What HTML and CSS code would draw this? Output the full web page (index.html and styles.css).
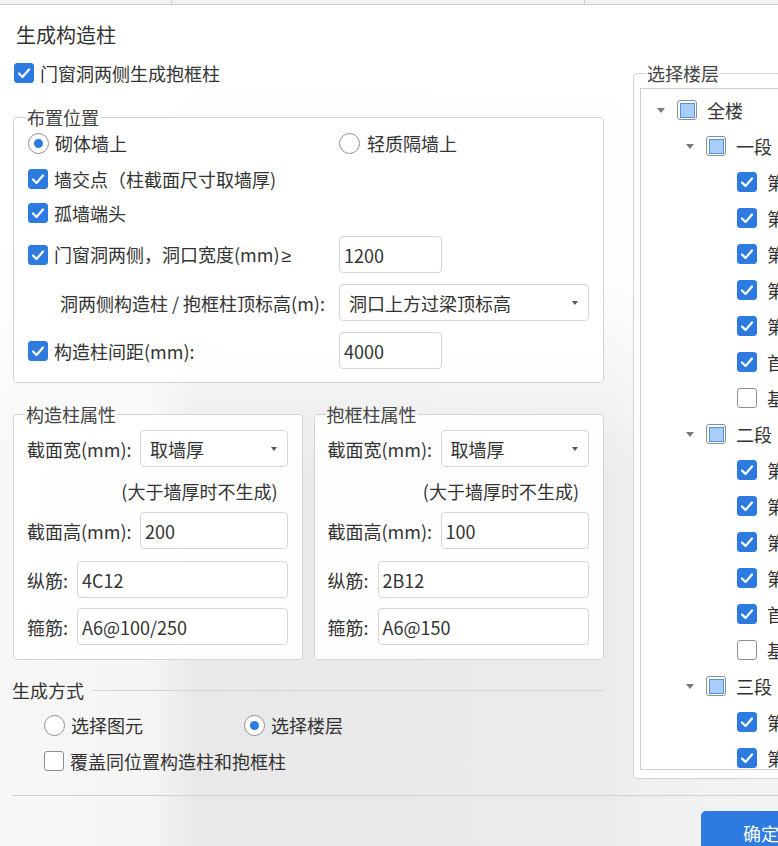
FILE: index.html
```html
<!DOCTYPE html>
<html lang="zh-CN">
<head>
<meta charset="utf-8">
<title>生成构造柱</title>
<link rel="stylesheet" href="styles.css">
</head>
<body>
<div class="dialog">
  <div class="topbar"><span class="seg seg1"></span><span class="seg seg2"></span></div>
  <div class="title">生成构造柱</div>

  <div class="main">
    <div class="left">
      <div class="check-row top-check">
        <span class="cb on"><svg viewBox="0 0 18 18"><polyline points="4,9.5 7.5,13 14,5.5"/></svg></span>
        <span>门窗洞两侧生成抱框柱</span>
      </div>

      <fieldset class="group place">
        <legend>布置位置</legend>
        <div class="row row-a">
          <div class="col1"><span class="radio on"></span><span>砌体墙上</span></div>
          <div class="col2"><span class="radio"></span><span>轻质隔墙上</span></div>
        </div>
        <div class="row row-b">
          <div class="col1 wide"><span class="cb on"><svg viewBox="0 0 18 18"><polyline points="4,9.5 7.5,13 14,5.5"/></svg></span><span>墙交点（柱截面尺寸取墙厚)</span></div>
        </div>
        <div class="row row-c">
          <div class="col1"><span class="cb on"><svg viewBox="0 0 18 18"><polyline points="4,9.5 7.5,13 14,5.5"/></svg></span><span>孤墙端头</span></div>
        </div>
        <div class="row row-d">
          <div class="col1"><span class="cb on"><svg viewBox="0 0 18 18"><polyline points="4,9.5 7.5,13 14,5.5"/></svg></span><span>门窗洞两侧，洞口宽度(mm)<span class="ge">≥</span></span></div>
          <div class="field w-short">1200</div>
        </div>
        <div class="row row-e">
          <div class="col1 indent"><span>洞两侧构造柱 / 抱框柱顶标高(m):</span></div>
          <div class="field select w-long"><span>洞口上方过梁顶标高</span><span class="arrow"></span></div>
        </div>
        <div class="row row-f">
          <div class="col1"><span class="cb on"><svg viewBox="0 0 18 18"><polyline points="4,9.5 7.5,13 14,5.5"/></svg></span><span>构造柱间距(mm):</span></div>
          <div class="field w-short">4000</div>
        </div>
      </fieldset>

      <div class="props">
        <fieldset class="group prop prop-l">
          <legend>构造柱属性</legend>
          <div class="prow"><span class="plabel long">截面宽(mm):</span><div class="field select grow"><span>取墙厚</span><span class="arrow"></span></div></div>
          <div class="hint">(大于墙厚时不生成)</div>
          <div class="prow"><span class="plabel long">截面高(mm):</span><div class="field grow">200</div></div>
          <div class="prow gap12"><span class="plabel short">纵筋:</span><div class="field grow">4C12</div></div>
          <div class="prow gap10"><span class="plabel short">箍筋:</span><div class="field grow">A6@100/250</div></div>
        </fieldset>
        <fieldset class="group prop prop-r">
          <legend>抱框柱属性</legend>
          <div class="prow"><span class="plabel long">截面宽(mm):</span><div class="field select grow"><span>取墙厚</span><span class="arrow"></span></div></div>
          <div class="hint">(大于墙厚时不生成)</div>
          <div class="prow"><span class="plabel long">截面高(mm):</span><div class="field grow">100</div></div>
          <div class="prow gap12"><span class="plabel short">纵筋:</span><div class="field grow">2B12</div></div>
          <div class="prow gap10"><span class="plabel short">箍筋:</span><div class="field grow">A6@150</div></div>
        </fieldset>
      </div>

      <div class="mode-head"><span>生成方式</span><span class="line"></span></div>
      <div class="mode-radios">
        <div class="opt"><span class="radio"></span><span>选择图元</span></div>
        <div class="opt"><span class="radio on"></span><span>选择楼层</span></div>
      </div>
      <div class="check-row overwrite">
        <span class="cb"></span><span>覆盖同位置构造柱和抱框柱</span>
      </div>
    </div>

    <div class="right">
      <fieldset class="group floors">
        <legend>选择楼层</legend>
        <div class="tree">
          <div class="node lv0"><span class="caret"></span><span class="cb part"></span><span class="txt">全楼</span></div>
          <div class="node lv1"><span class="caret"></span><span class="cb part"></span><span class="txt">一段</span></div>
          <div class="node lv2"><span class="cb on"><svg viewBox="0 0 18 18"><polyline points="4,9.5 7.5,13 14,5.5"/></svg></span><span class="txt">第5层</span></div>
          <div class="node lv2"><span class="cb on"><svg viewBox="0 0 18 18"><polyline points="4,9.5 7.5,13 14,5.5"/></svg></span><span class="txt">第4层</span></div>
          <div class="node lv2"><span class="cb on"><svg viewBox="0 0 18 18"><polyline points="4,9.5 7.5,13 14,5.5"/></svg></span><span class="txt">第3层</span></div>
          <div class="node lv2"><span class="cb on"><svg viewBox="0 0 18 18"><polyline points="4,9.5 7.5,13 14,5.5"/></svg></span><span class="txt">第2层</span></div>
          <div class="node lv2"><span class="cb on"><svg viewBox="0 0 18 18"><polyline points="4,9.5 7.5,13 14,5.5"/></svg></span><span class="txt">第1层</span></div>
          <div class="node lv2"><span class="cb on"><svg viewBox="0 0 18 18"><polyline points="4,9.5 7.5,13 14,5.5"/></svg></span><span class="txt">首层</span></div>
          <div class="node lv2"><span class="cb"></span><span class="txt">基础层</span></div>
          <div class="node lv1"><span class="caret"></span><span class="cb part"></span><span class="txt">二段</span></div>
          <div class="node lv2"><span class="cb on"><svg viewBox="0 0 18 18"><polyline points="4,9.5 7.5,13 14,5.5"/></svg></span><span class="txt">第4层</span></div>
          <div class="node lv2"><span class="cb on"><svg viewBox="0 0 18 18"><polyline points="4,9.5 7.5,13 14,5.5"/></svg></span><span class="txt">第3层</span></div>
          <div class="node lv2"><span class="cb on"><svg viewBox="0 0 18 18"><polyline points="4,9.5 7.5,13 14,5.5"/></svg></span><span class="txt">第2层</span></div>
          <div class="node lv2"><span class="cb on"><svg viewBox="0 0 18 18"><polyline points="4,9.5 7.5,13 14,5.5"/></svg></span><span class="txt">第1层</span></div>
          <div class="node lv2"><span class="cb on"><svg viewBox="0 0 18 18"><polyline points="4,9.5 7.5,13 14,5.5"/></svg></span><span class="txt">首层</span></div>
          <div class="node lv2"><span class="cb"></span><span class="txt">基础层</span></div>
          <div class="node lv1"><span class="caret"></span><span class="cb part"></span><span class="txt">三段</span></div>
          <div class="node lv2"><span class="cb on"><svg viewBox="0 0 18 18"><polyline points="4,9.5 7.5,13 14,5.5"/></svg></span><span class="txt">第4层</span></div>
          <div class="node lv2"><span class="cb on"><svg viewBox="0 0 18 18"><polyline points="4,9.5 7.5,13 14,5.5"/></svg></span><span class="txt">第3层</span></div>
          <div class="node lv2"><span class="cb on"><svg viewBox="0 0 18 18"><polyline points="4,9.5 7.5,13 14,5.5"/></svg></span><span class="txt">第2层</span></div>
        </div>
      </fieldset>
    </div>
  </div>

  <div class="divider"></div>
  <div class="footer">
    <div class="btn primary">确定</div>
    <div class="btn ghost">取消</div>
  </div>
</div>
</body>
</html>
```

FILE: styles.css
```css
* { box-sizing: border-box; }

html, body {
  margin: 0;
  width: 778px;
  height: 846px;
  overflow: hidden;
}

body {
  font-family: "Noto Sans CJK SC", "Microsoft YaHei", "Noto Sans", sans-serif;
  font-size: 18px;
  color: #333;
  background:
    linear-gradient(180deg, #ffffff 0px, rgba(255,255,255,0.93) 280px, rgba(255,255,255,0) 480px),
    linear-gradient(90deg, #f7f7f7 0, #f5f5f5 150px, #e9e9e9 195px, #ebebeb 610px, #f0f0f0 640px, #f3f3f3 100%);
}

.dialog {
  width: 962px;
  padding: 0 12px;
}

.topbar {
  display: flex;
  height: 5px;
  margin: 0 -12px;
  background: #f1f1f1;
  border-bottom: 1px solid #cdcdcd;
}
.seg { display: block; height: 100%; border-right: 1px solid #cfcfcf; }
.seg1 { width: 172px; }
.seg2 { width: 413px; }

.title {
  font-size: 20px;
  line-height: 28px;
  margin-top: 16px;
  padding-left: 4px;
  color: #333;
}

.main {
  display: flex;
  align-items: flex-start;
  gap: 29px;
  margin-top: 12px;
}

.left {
  width: 592px;
  flex: none;
  display: flex;
  flex-direction: column;
}
.right { flex: 1; min-width: 0; }

/* checkbox & radio */
.cb {
  width: 20px;
  height: 20px;
  flex: none;
  border-radius: 3px;
  border: 1.5px solid #8e8e8e;
  background: #fff;
  display: inline-flex;
  align-items: center;
  justify-content: center;
}
.cb.on { background: #2d7be0; border-color: #2d7be0; }
.cb svg { width: 18px; height: 18px; display: block; }
.cb svg polyline { fill: none; stroke: #fff; stroke-width: 2.2; stroke-linecap: round; stroke-linejoin: round; }
.cb.part::after {
  content: "";
  width: 13px;
  height: 13px;
  background: #a9cdf8;
  border: 1px solid #4d94ea;
}

.radio {
  width: 21px;
  height: 21px;
  flex: none;
  border-radius: 50%;
  border: 1.5px solid #8e8e8e;
  background: #fff;
  display: inline-flex;
  align-items: center;
  justify-content: center;
}
.radio.on::after {
  content: "";
  width: 9px;
  height: 9px;
  border-radius: 50%;
  background: #2d7be0;
}

.check-row {
  display: flex;
  align-items: center;
  gap: 6px;
  height: 24px;
  line-height: 24px;
}
.top-check { margin-left: 2px; }

.ge { font-family: "Liberation Sans", "DejaVu Sans", sans-serif; margin-left: 2px; }

/* group boxes */
fieldset.group {
  margin: 0;
  min-width: 0;
  border: 1px solid #d3d3d3;
  border-radius: 4px;
  background: rgba(255,255,255,0.9);
}
fieldset.group legend {
  padding: 0 1px;
  margin-left: -2px;
  font-size: 18px;
  line-height: 24px;
  color: #444;
}

fieldset.place {
  margin: 20px 0 0 1px;
  width: 591px;
  padding: 0 13px 13px 14px;
}
.place .row { display: flex; align-items: center; }
.col1 {
  width: 311px;
  flex: none;
  display: flex;
  align-items: center;
  gap: 6px;
  white-space: nowrap;
  line-height: 24px;
}
.col1.wide { width: auto; }
.col1.indent { padding-left: 32px; }
.col2 { display: flex; align-items: center; gap: 7px; line-height: 24px; }
.row-a { height: 28px; }
.row-b { height: 28px; margin-top: 8px; }
.row-c { height: 28px; margin-top: 6px; }
.row-d { height: 37px; margin-top: 9px; }
.row-e { height: 37px; margin-top: 11px; }
.row-f { height: 37px; margin-top: 11px; }

.field {
  height: 37px;
  border: 1px solid #d6d6d6;
  border-radius: 4px;
  background: #fff;
  display: flex;
  align-items: center;
  padding-left: 4px;
  font-size: 18px;
  white-space: nowrap;
}
.w-short { width: 103px; }
.w-long { width: 250px; }
.select {
  justify-content: space-between;
  padding: 0 10px 0 9px;
}
.arrow {
  width: 0;
  height: 0;
  border-left: 3.5px solid transparent;
  border-right: 3.5px solid transparent;
  border-top: 4px solid #555;
}

/* property groups */
.props {
  display: flex;
  gap: 11px;
  margin: 19px 0 0 1px;
}
fieldset.prop { padding: 4px 14px 14px 13px; }
.prop-l { width: 290px; }
.prop-r { width: 291px; }
.prow { display: flex; align-items: center; }
.plabel { flex: none; white-space: nowrap; line-height: 24px; }
.plabel.long { width: 113px; }
.plabel.short { width: 50px; }
.grow { flex: 1; min-width: 0; }
.prow .field:not(.select) { padding-left: 4px; }
.gap12 { margin-top: 12px; }
.gap10 { margin-top: 10px; }
.hint {
  height: 45px;
  padding: 3px 10px 0 0;
  line-height: 42px;
  text-align: right;
  white-space: nowrap;
}

/* generate mode */
.mode-head {
  display: flex;
  align-items: center;
  height: 24px;
  line-height: 24px;
  margin-top: 18px;
}
.mode-head .line {
  flex: 1;
  border-top: 1px solid #d4d4d4;
  margin-left: 8px;
}
.mode-radios {
  display: flex;
  height: 24px;
  margin-top: 11px;
  padding-left: 32px;
  line-height: 24px;
}
.mode-radios .opt {
  width: 200px;
  display: flex;
  align-items: center;
  gap: 6px;
}
.overwrite { margin-top: 12px; padding-left: 32px; }

/* floor tree */
fieldset.floors {
  margin-top: 0;
  width: 100%;
  padding: 3px 0 8px 6px;
}
fieldset.floors legend { margin-left: 6px; }
.tree {
  height: 682px;
  overflow: hidden;
  border: 1px solid #cfcfcf;
  background: #fff;
  padding-top: 3px;
}
.node {
  display: flex;
  align-items: center;
  height: 36px;
  white-space: nowrap;
}
.lv0 { padding-left: 16px; }
.lv1 { padding-left: 45px; }
.lv2 { padding-left: 96px; }
.caret {
  width: 0;
  height: 0;
  flex: none;
  border-left: 4px solid transparent;
  border-right: 4px solid transparent;
  border-top: 5px solid #7a7a7a;
  margin-right: 12px;
}
.node .txt { margin-left: 10px; line-height: 24px; }

/* footer */
.divider {
  margin-top: 16px;
  border-top: 1px solid #d0d0d0;
}
.footer {
  display: flex;
  justify-content: flex-end;
  gap: 9px;
  margin-top: 15px;
}
.btn {
  width: 120px;
  height: 44px;
  border-radius: 5px;
  display: flex;
  align-items: center;
  justify-content: center;
  font-size: 18px;
}
.btn.primary { background: #2d7be0; color: #fff; }
.btn.ghost { background: #fff; color: #333; border: 1px solid #cccccc; }
```
